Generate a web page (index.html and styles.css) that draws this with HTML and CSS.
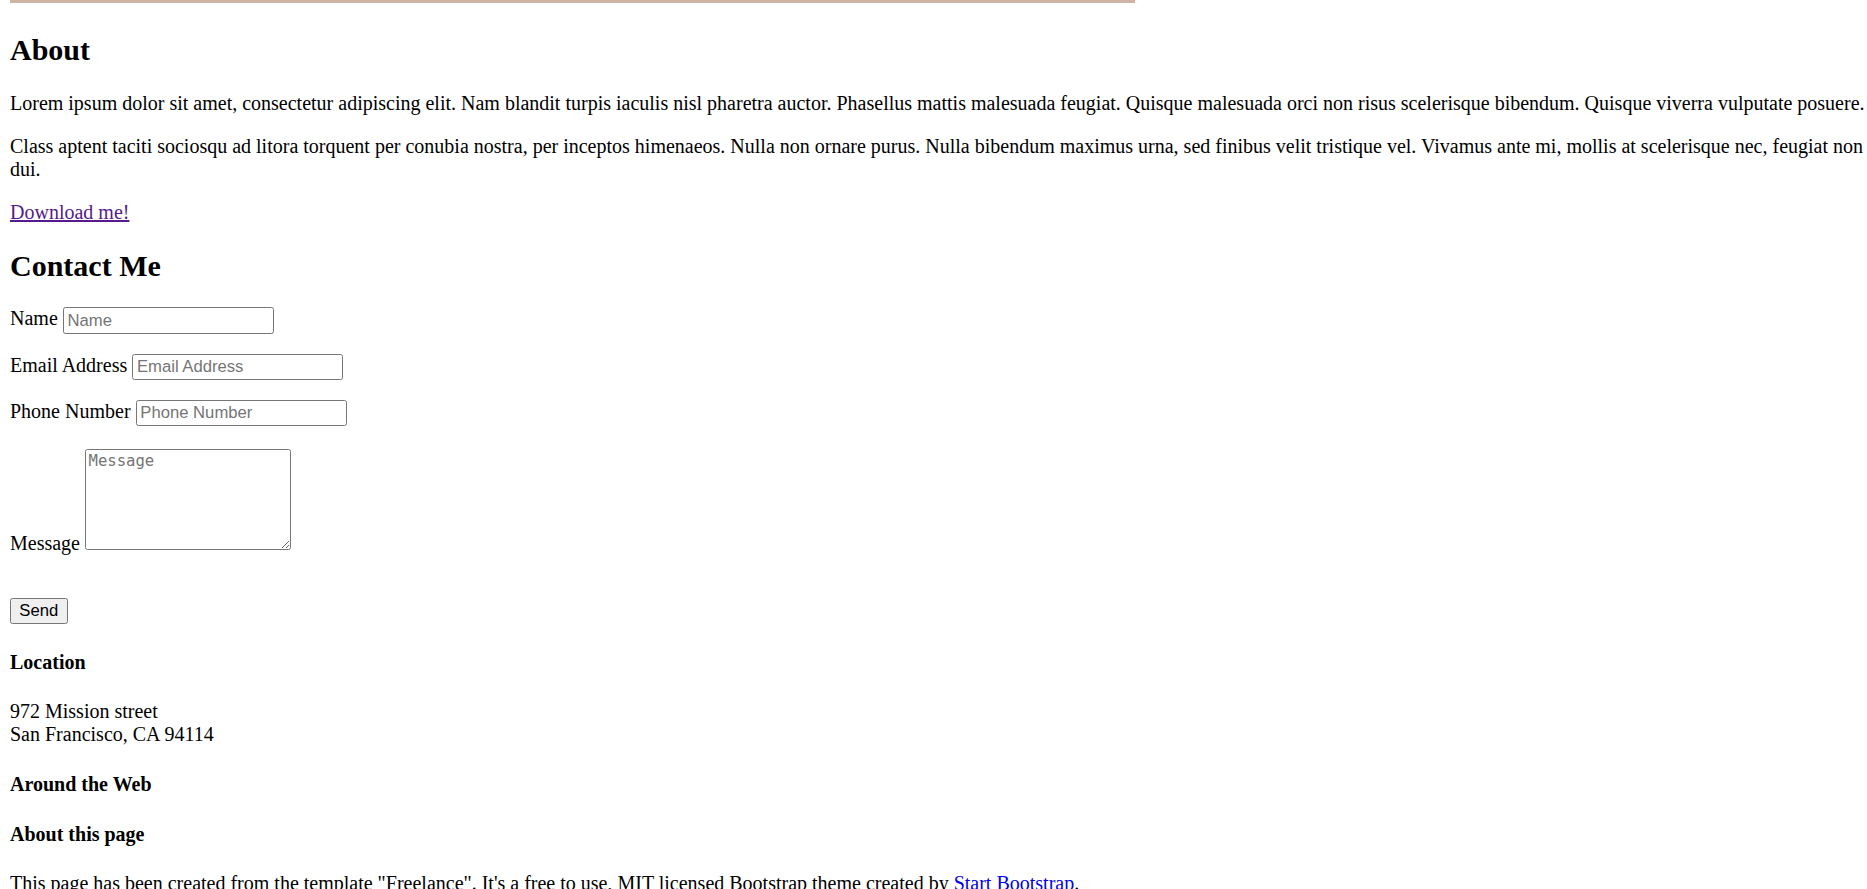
FILE: index.html
```html
<!DOCTYPE html>
<html>
<head>
<meta charset="utf-8">
<link rel="stylesheet" href="styles.css">
</head>
<body class="page">
<div class="top-bar"></div>
<section class="about">
  <h2 class="section-title">About</h2>
  <p>Lorem ipsum dolor sit amet, consectetur adipiscing elit. Nam blandit turpis iaculis nisl pharetra auctor. Phasellus mattis malesuada feugiat. Quisque malesuada orci non risus scelerisque bibendum. Quisque viverra vulputate posuere.</p>
  <p>Class aptent taciti sociosqu ad litora torquent per conubia nostra, per inceptos himenaeos. Nulla non ornare purus. Nulla bibendum maximus urna, sed finibus velit tristique vel. Vivamus ante mi, mollis at scelerisque nec, feugiat non dui.</p>
  <p><a class="visited-link" href="#">Download me!</a></p>
</section>
<section class="contact">
  <h2 class="section-title">Contact Me</h2>
  <form class="contact-form">
    <p><label>Name</label> <input class="field" type="text" placeholder="Name"></p>
    <p><label>Email Address</label> <input class="field" type="email" placeholder="Email Address"></p>
    <p><label>Phone Number</label> <input class="field" type="tel" placeholder="Phone Number"></p>
    <p><label>Message</label> <textarea class="message" rows="5" placeholder="Message"></textarea></p>
    <br>
    <button class="send" type="button">Send</button>
  </form>
</section>
<footer class="footer">
  <h4 class="footer-title">Location</h4>
  <p>972 Mission street<br>San Francisco, CA 94114</p>
  <h4 class="footer-title">Around the Web</h4>
  <h4 class="footer-title">About this page</h4>
  <p>This page has been created from the template "Freelance". It's a free to use, MIT licensed Bootstrap theme created by <a class="plain-link" href="#">Start Bootstrap</a>.</p>
</footer>
</body>
</html>
```
FILE: styles.css
```css
html {
  zoom: 1.25;
  overflow: hidden;
}
.page {
  margin: 0 0 8px 8px;
  font-family: "Liberation Serif", "Times New Roman", serif;
  font-size: 16px;
  color: #000;
  background: #fff;
}
.top-bar {
  width: 900px;
  height: 2.7px;
  background: #cdb4a4;
}
.about {
  padding-top: 3.6px;
}
.section-title {
  font-size: 1.5em;
  margin: 0.83em 0;
}
.visited-link {
  color: #551a8b;
}
.plain-link {
  color: #0000ee;
  text-decoration: none;
}
.field {
  box-sizing: border-box;
  font-family: "Liberation Sans", Arial, sans-serif;
  font-size: 13.333px;
  border: 1px solid #767676;
  border-radius: 2px;
  padding: 1px 3px;
  width: 169px;
  height: 21px;
}
.field::placeholder,
.message::placeholder {
  color: #757575;
}
.message {
  box-sizing: border-box;
  font-family: "DejaVu Sans Mono", "Liberation Mono", monospace;
  font-size: 12.5px;
  border: 1px solid #767676;
  border-radius: 2px;
  padding: 2px;
  width: 165px;
  height: 81px;
  margin-top: 2px;
}
.send {
  box-sizing: border-box;
  font-family: "Liberation Sans", Arial, sans-serif;
  font-size: 13.333px;
  color: #000;
  background: #efefef;
  border: 1px solid #767676;
  border-radius: 2px;
  padding: 1px 6px;
  height: 21px;
  width: 46px;
}
.footer-title {
  font-size: 1em;
  margin: 1.33em 0;
}
```
